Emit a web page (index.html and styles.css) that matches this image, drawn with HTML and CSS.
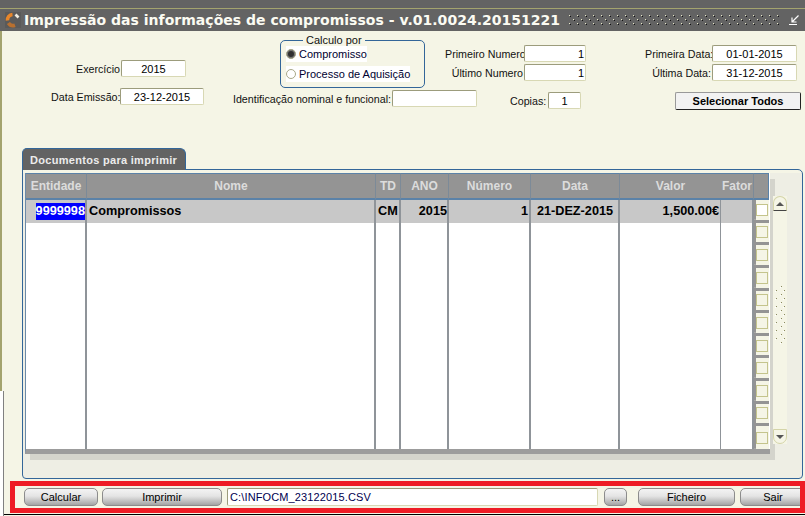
FILE: index.html
```html
<!DOCTYPE html>
<html lang="pt">
<head>
  <meta charset="UTF-8" />
  <title>Impressão das informações de compromissos</title>
  <link rel="stylesheet" href="styles.css">
</head>
<body>

<div class="edge"></div>

<div class="top-strip"></div>

<div class="titlebar">
  <svg class="logo" width="16" height="16" viewBox="0 0 16 16">
    <rect width="16" height="16" fill="#5a5a5a"/>
    <path d="M2.5 8.5 A5.5 5.5 0 0 1 7.5 2.5" fill="none" stroke="#e8862a" stroke-width="3.6"/>
    <path d="M3.4 11 A5.5 5.5 0 0 0 10 13.2" fill="none" stroke="#b87030" stroke-width="3.6"/>
    <path d="M10.5 2.5 L13.5 5.5" fill="none" stroke="#f0ece0" stroke-width="2.6"/>
  </svg>
  <span class="title">Impressão das informações de compromissos - v.01.0024.20151221</span>
  <svg class="title-dots" width="211" height="12">
    <defs>
      <pattern id="dots" width="8" height="8" patternUnits="userSpaceOnUse">
        <rect x="0" y="0" width="1" height="1" fill="#e8e8c8"/>
        <rect x="1" y="1" width="1" height="1" fill="#111"/>
        <rect x="4" y="4" width="1" height="1" fill="#e8e8c8"/>
        <rect x="5" y="5" width="1" height="1" fill="#111"/>
      </pattern>
    </defs>
    <rect width="211" height="11" fill="url(#dots)"/>
  </svg>
  <svg class="minimize" width="11" height="11" viewBox="0 0 11 11">
    <path d="M9.5 0.5 L3 7 M3 2.5 V7 H7.5 M0 9.5 H8" fill="none" stroke="#fff" stroke-width="1.2"/>
  </svg>
</div>

<div class="form-top">
  <div class="row-a">
    <div class="field f-exercicio">
      <label>Exercício</label>
      <div class="input w65 center">2015</div>
    </div>

    <fieldset class="group">
      <legend>Calculo por</legend>
      <div class="option"><span class="radio on"></span><span>Compromisso</span></div>
      <div class="option"><span class="radio"></span><span>Processo de Aquisição</span></div>
    </fieldset>

    <div class="stack numbers">
      <div class="field">
        <label class="w78">Primeiro Numero</label>
        <div class="input w62 right">1</div>
      </div>
      <div class="field">
        <label class="w78">Último Numero</label>
        <div class="input w62 right">1</div>
      </div>
    </div>

    <div class="stack dates">
      <div class="field">
        <label class="w66">Primeira Data:</label>
        <div class="input w85 center">01-01-2015</div>
      </div>
      <div class="field">
        <label class="w66">Última Data:</label>
        <div class="input w85 center">31-12-2015</div>
      </div>
    </div>
  </div>

  <div class="row-b">
    <div class="field f-emissao">
      <label>Data Emissão:</label>
      <div class="input w84 center">23-12-2015</div>
    </div>
    <div class="field f-ident">
      <label>Identificação nominal e funcional:</label>
      <div class="input w85"></div>
    </div>
    <div class="field f-copias">
      <label>Copias:</label>
      <div class="input w33 center">1</div>
    </div>
    <button class="btn-todos">Selecionar Todos</button>
  </div>
</div>

<div class="tab">Documentos para imprimir</div>

<div class="panel">
  <div class="grid">
    <div class="col c-ent">
      <div class="head">Entidade</div>
      <div class="cell right"><span class="selected">9999998</span></div>
    </div>
    <div class="col c-nome">
      <div class="head">Nome</div>
      <div class="cell">Compromissos</div>
    </div>
    <div class="col c-td">
      <div class="head">TD</div>
      <div class="cell">CM</div>
    </div>
    <div class="col c-ano">
      <div class="head">ANO</div>
      <div class="cell right">2015</div>
    </div>
    <div class="col c-num">
      <div class="head">Número</div>
      <div class="cell right">1</div>
    </div>
    <div class="col c-data">
      <div class="head">Data</div>
      <div class="cell center">21-DEZ-2015</div>
    </div>
    <div class="col c-valor">
      <div class="head">Valor</div>
      <div class="cell right">1,500.00€</div>
    </div>
    <div class="col c-fator">
      <div class="head">Fator</div>
      <div class="cell"></div>
    </div>
    <div class="col c-check">
      <div class="head"></div>
      <div class="check"><span class="box first"></span></div>
      <div class="check"><span class="box"></span></div>
      <div class="check"><span class="box"></span></div>
      <div class="check"><span class="box"></span></div>
      <div class="check"><span class="box"></span></div>
      <div class="check"><span class="box"></span></div>
      <div class="check"><span class="box"></span></div>
      <div class="check"><span class="box"></span></div>
      <div class="check"><span class="box"></span></div>
      <div class="check"><span class="box"></span></div>
      <div class="check"><span class="box"></span></div>
    </div>
  </div>

  <div class="scrollbar">
    <div class="arrow up"></div>
    <svg class="grip" width="10" height="60">
      <defs>
        <pattern id="grip" width="8" height="8" patternUnits="userSpaceOnUse">
          <rect x="6" y="1" width="1" height="1" fill="#8a8a60"/>
          <rect x="5" y="2" width="1" height="1" fill="#fff"/>
          <rect x="1" y="5" width="1" height="1" fill="#8a8a60"/>
          <rect x="0" y="6" width="1" height="1" fill="#fff"/>
        </pattern>
      </defs>
      <rect width="10" height="60" fill="url(#grip)"/>
    </svg>
    <div class="arrow down"></div>
  </div>
</div>

<div class="actions">
  <button class="btn b-calcular">Calcular</button>
  <button class="btn b-imprimir">Imprimir</button>
  <div class="input path">C:\INFOCM_23122015.CSV</div>
  <button class="btn b-dots">...</button>
  <button class="btn b-ficheiro">Ficheiro</button>
  <button class="btn b-sair">Sair</button>
</div>

<div class="bottom-line"></div>

</body>
</html>
```

FILE: styles.css
```css
html, body {
  margin: 0;
  height: 516px;
  overflow: hidden;
}

body {
  position: relative;
  font-family: "Liberation Sans", Arial, sans-serif;
  font-size: 11px;
  color: #000;
  background: linear-gradient(#a3a36e, #a3a36e) left top / 2px 100% no-repeat, #f5f5e6;
}

/* window edge bottom left */
.edge {
  position: absolute;
  left: 0;
  top: 391px;
  width: 3px;
  height: 125px;
  background: #fff;
  border-right: 1px solid #808080;
}

.top-strip {
  height: 8px;
  background: #636363;
  border-bottom: 1px solid #a3a36e;
}

.titlebar {
  height: 22px;
  background: #636363;
  display: flex;
  align-items: center;
  padding-left: 5px;
}

.logo {
  flex: none;
}

.title {
  margin-left: 3px;
  width: 545px;
  flex: none;
  white-space: nowrap;
  font-family: "DejaVu Sans", sans-serif;
  font-weight: bold;
  font-size: 14px;
  letter-spacing: 0.02px;
  color: #fbfbf2;
}

.title-dots {
  flex: none;
  margin-top: 1px;
}

.minimize {
  flex: none;
  margin-left: 9px;
}

/* form fields */
.form-top {
  height: 117px;
}

.row-a {
  display: flex;
  align-items: flex-start;
  height: 48px;
  padding-top: 9px;
}

.row-b {
  display: flex;
  align-items: flex-start;
  height: 21px;
}

.field {
  display: flex;
  align-items: center;
  flex: none;
}

.field label {
  text-align: right;
  white-space: nowrap;
  margin-right: 1px;
  font-size: 10.7px;
  color: #111;
}

.input {
  box-sizing: border-box;
  height: 17px;
  line-height: 16px;
  background: #fff;
  border: 1px solid;
  border-color: #9c9c7c #d8d8b4 #d8d8b4 #9c9c7c;
  border-radius: 2px;
  color: #000;
  padding: 0 1px;
  white-space: nowrap;
  font-size: 11px;
}

.center { text-align: center; }
.right { text-align: right; }

.w33 { width: 33px; }
.w62 { width: 62px; }
.w65 { width: 65px; }
.w84 { width: 84px; }
.w85 { width: 85px; }
.field .w66 { width: 66px; }
.field .w78 { width: 78px; }

.f-exercicio {
  margin-left: 76px;
  margin-top: 20px;
}

.f-exercicio label {
  width: 44px;
}

.group {
  box-sizing: border-box;
  flex: none;
  width: 145px;
  height: 53px;
  margin: -5px 0 0 94px;
  padding: 0 0 0 5px;
  border: 1px solid #336699;
  border-radius: 5px;
}

.group legend {
  margin-left: 17px;
  padding: 0 3px;
  font-size: 11px;
  line-height: 11px;
  color: #111;
}

.option {
  display: flex;
  align-items: center;
  height: 16px;
  margin-bottom: 4px;
  background: #fff;
  width: max-content;
}

.option span:last-child {
  margin-left: 3px;
  color: #000030;
}

.radio {
  box-sizing: border-box;
  width: 10px;
  height: 10px;
  border-radius: 50%;
  border: 1px solid #a8a888;
  background: #fff;
}

.radio.on {
  background: #303030;
  box-shadow: inset 0 0 0 1px #777;
}

.stack {
  display: flex;
  flex-direction: column;
  gap: 2px;
  margin-top: 5px;
}

.numbers {
  margin-left: 20px;
}

.dates {
  margin-left: 59px;
}

.f-emissao {
  margin-left: 51px;
}

.f-emissao label {
  width: 68px;
}

.f-ident {
  margin-left: 28px;
  margin-top: 2px;
}

.f-ident label {
  width: 159px;
}

.f-copias {
  margin-left: 33px;
  margin-top: 4px;
}

.f-copias label {
  width: 36px;
  margin-right: 2px;
}

.btn-todos {
  box-sizing: border-box;
  flex: none;
  width: 126px;
  height: 18px;
  margin: 4px 0 0 94px;
  padding: 0;
  font-family: "Liberation Sans", Arial, sans-serif;
  font-size: 11px;
  font-weight: bold;
  color: #000;
  background: #f2f2f2;
  border: 1px solid;
  border-color: #999 #222 #222 #999;
  border-radius: 2px;
}

/* tab and panel */
.tab {
  box-sizing: border-box;
  width: 164px;
  height: 22px;
  margin-left: 22px;
  padding-left: 7px;
  line-height: 22px;
  font-size: 11px;
  font-weight: bold;
  letter-spacing: 0.3px;
  color: #ececec;
  background: #636363;
  border: 1px solid #336699;
  border-bottom: none;
  border-radius: 5px 6px 0 0;
  position: relative;
}

.panel {
  box-sizing: border-box;
  display: flex;
  align-items: flex-start;
  width: 781px;
  height: 310px;
  margin-left: 22px;
  margin-top: -1px;
  padding: 3px 0 0 2px;
  background: linear-gradient(#f5f5e6, #f5f5e6) top / 100% 3px no-repeat, #eeeee4;
  border: 1px solid #336699;
  border-radius: 0 5px 4px 4px;
}

.grid {
  display: flex;
  flex: none;
  width: 745px;
  height: 281px;
  box-sizing: border-box;
  background: #fff;
  border-bottom: 5px solid #9c9c9c;
  box-shadow: 5px 6px 0 #d4d4cc;
  border-left: 1px solid #6c8aa8;
}

.col {
  box-sizing: border-box;
  flex: none;
  border-right: 2px solid #8f9499;
}

.head {
  box-sizing: border-box;
  height: 27px;
  line-height: 24px;
  margin-right: -2px;
  text-align: center;
  font-size: 12px;
  font-weight: bold;
  color: #dcdcdc;
  background: #949494;
  border-top: 1px solid #5b82a8;
  border-bottom: 2px solid #5b82a8;
  border-right: 1px solid #7c8a98;
}

.cell {
  box-sizing: border-box;
  height: 23px;
  line-height: 23px;
  padding: 0 1px 0 2px;
  font-size: 12.7px;
  font-weight: bold;
  background: #c8c8c8;
  white-space: nowrap;
}

.selected {
  display: inline-block;
  height: 17px;
  line-height: 17px;
  background: #0000ff;
  color: #fff;
}

.c-ent { width: 61px; }
.c-nome { width: 289px; }
.c-td { width: 25px; }
.c-ano { width: 48px; }
.c-num { width: 82px; }
.c-data { width: 89px; }
.c-valor { width: 101px; border-right-width: 1px; }
.c-fator { width: 33px; }
.c-check { width: 15px; border-right: none; background: #f5f5e6; }

.c-ano .cell,
.c-ent .cell {
  padding-right: 0;
}

.c-check .head {
  margin-right: 0;
  border-right: 1px solid #5b82a8;
}

.check {
  box-sizing: border-box;
  height: 22.64px;
  display: flex;
  align-items: center;
  padding-left: 2px;
  border-bottom: 3px solid #949494;
  background: linear-gradient(#949494, #949494) left / 2px 100% no-repeat;
}

.check:last-child {
  border-bottom: none;
}

.box {
  box-sizing: border-box;
  width: 12px;
  height: 12px;
  background: #f5f5e6;
  border: 1px solid #c4c48c;
}

.box.first {
  background: #fff;
}

/* scrollbar */
.scrollbar {
  box-sizing: border-box;
  flex: none;
  display: flex;
  flex-direction: column;
  align-items: center;
  justify-content: space-between;
  width: 14px;
  height: 248px;
  margin: 23px 0 0 3px;
  background: #f5f5e6;
}

.arrow {
  box-sizing: border-box;
  flex: none;
  width: 14px;
  height: 15px;
  border: 1px solid #d4d4a8;
  display: flex;
  align-items: center;
  justify-content: center;
  background: #f5f5e6;
}

.arrow.up {
  border-radius: 7px 7px 0 0;
  border-bottom: 1px solid #444;
}

.arrow.down {
  border-radius: 0 0 7px 7px;
}

.arrow.up::before {
  content: "";
  border-left: 4px solid transparent;
  border-right: 4px solid transparent;
  border-bottom: 4px solid #555;
}

.arrow.down::before {
  content: "";
  border-left: 4px solid transparent;
  border-right: 4px solid transparent;
  border-top: 4px solid #555;
}

.grip {
  flex: none;
  margin-bottom: 10px;
}

/* bottom buttons */
.actions {
  box-sizing: border-box;
  display: flex;
  align-items: center;
  width: 795px;
  height: 32px;
  margin: 2px 0 0 10px;
  padding-left: 9px;
  border: 5px solid #ee1c25;
  overflow: hidden;
}

.btn {
  box-sizing: border-box;
  flex: none;
  height: 18px;
  padding: 0;
  font-family: "Liberation Sans", Arial, sans-serif;
  font-size: 11px;
  color: #000;
  border: 1px solid #8c8c8c;
  border-radius: 5px;
  background: linear-gradient(#f4f4f4, #e4e4e4 45%, #a4a4a4);
}

.b-calcular { width: 74px; }
.b-imprimir { width: 120px; margin-left: 4px; }
.b-dots { width: 23px; margin-left: 6px; }
.b-ficheiro { width: 97px; margin-left: 11px; }
.b-sair { width: 66px; margin-left: 5px; }

.path {
  flex: none;
  width: 371px;
  height: 18px;
  margin-left: 5px;
  color: #000050;
  padding-left: 2px;
  letter-spacing: 0.13px;
}

.bottom-line {
  height: 1px;
  margin: 1px 0 0 3px;
  background: #000;
}
```
